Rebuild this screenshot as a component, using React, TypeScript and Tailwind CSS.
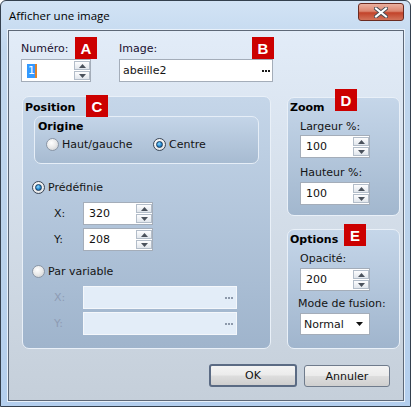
import React from "react";

function Dots({ dim }: { dim?: boolean }) {
  const dot = dim ? "w-[2px] h-[2px] bg-[#8d99ab]" : "w-[2px] h-[2px] bg-[#1a1a1a]";
  return (
    <span className="flex gap-[1px] items-center">
      <span className={dot} />
      <span className={dot} />
      <span className={dot} />
    </span>
  );
}

function SpinBtn({ up }: { up?: boolean }) {
  return (
    <span className="h-[9px] w-[16px] border border-[#b3bdc9] bg-gradient-to-b from-[#fdfdfe] to-[#e1e6ec] flex items-center justify-center">
      <svg width="7" height="4" viewBox="0 0 7 4">
        {up ? <polygon points="0,4 7,4 3.5,0" fill="#4b525c" /> : <polygon points="0,0 7,0 3.5,4" fill="#4b525c" />}
      </svg>
    </span>
  );
}

function SpinInput({ value, selected }: { value: string; selected?: boolean }) {
  return (
    <div className="w-[70px] h-[23px] bg-white border border-[#a4adb9] flex">
      <div className="flex-1 flex items-center pl-[5px] text-[11px] text-[#111]">
        {selected ? (
          <span className="bg-[#3399ff] text-white leading-[14px] pl-[1px] border-r-2 border-[#e0832a]">{value}</span>
        ) : (
          value
        )}
      </div>
      <div className="flex flex-col gap-[1px] pt-[1px] w-[16px]">
        <SpinBtn up />
        <SpinBtn />
      </div>
    </div>
  );
}

function Radio({ checked }: { checked?: boolean }) {
  return (
    <span
      className={
        checked
          ? "w-[13px] h-[13px] rounded-full border border-[#3a4656] bg-[radial-gradient(circle_at_40%_35%,#ffffff_0%,#eeeeee_55%,#cfd3d8_100%)] flex items-center justify-center shrink-0"
          : "w-[13px] h-[13px] rounded-full border border-[#8a96a6] bg-[radial-gradient(circle_at_40%_35%,#ffffff_0%,#e9e9e9_50%,#c6c9cd_100%)] shrink-0"
      }
    >
      {checked && (
        <span className="w-[7px] h-[7px] rounded-full border border-[#173a5e] bg-[radial-gradient(circle_at_40%_35%,#8fdcff_0%,#2b8fd6_50%,#0d4d86_100%)]" />
      )}
    </span>
  );
}

function Badge({ letter, className }: { letter: string; className: string }) {
  return (
    <div
      className={`absolute w-[22px] h-[22px] bg-[#cc0000] text-white flex items-center justify-center font-['Liberation_Sans',sans-serif] font-bold text-[15px] ${className}`}
    >
      {letter}
    </div>
  );
}

function Button({ label, primary }: { label: string; primary?: boolean }) {
  return (
    <div
      className={
        primary
          ? "w-[88px] h-[23px] rounded-[3px] border-2 border-[#5b6b84] bg-[linear-gradient(180deg,#f4f4f4_0%,#ebebeb_48%,#dddddd_52%,#cfcfcf_100%)] flex items-center justify-center text-[11px] text-[#111]"
          : "w-[86px] h-[22px] mt-[1px] rounded-[3px] border border-[#6f7b8c] bg-[linear-gradient(180deg,#f4f4f4_0%,#ebebeb_48%,#dddddd_52%,#cfcfcf_100%)] flex items-center justify-center text-[11px] text-[#111]"
      }
    >
      {label}
    </div>
  );
}

export default function App() {
  return (
    <div className="relative w-[411px] h-[407px] font-['DejaVu_Sans',sans-serif] text-[11px] leading-[13px] text-[#141414]">
      <div className="w-full h-full flex flex-col border border-[#34404e] rounded-t-[6px] bg-[linear-gradient(180deg,#d2e3f5_0%,#c1d7ee_12%,#bad2eb_60%,#b4cfee_100%)]">
        {/* Title bar */}
        <div className="h-[29px] flex items-start justify-between pl-[8px] pr-[6px]">
          <span className="mt-[7px] font-['Open_Sans',sans-serif] text-[11.5px] leading-[16px] text-black">Afficher une image</span>
          <div className="mt-[2px] w-[46px] h-[18px] rounded-[3px] border border-[#6b2b21] bg-[linear-gradient(180deg,#eab0a0_0%,#dc8670_45%,#c2432a_55%,#d2735a_100%)] flex items-center justify-center">
            <svg width="14" height="11" viewBox="0 0 14 11">
              <path d="M2 1.5 L12 9.5 M12 1.5 L2 9.5" stroke="#4a4f57" strokeWidth="4" strokeLinecap="square" />
              <path d="M2 1.5 L12 9.5 M12 1.5 L2 9.5" stroke="#ffffff" strokeWidth="2" strokeLinecap="square" />
            </svg>
          </div>
        </div>

        {/* Client area */}
        <div className="ml-[7px] mr-[6px] mb-[5px] flex-1 border border-[#5d6877] shadow-[0_0_0_1px_#e9f1fa] bg-gradient-to-b from-[#e2ecf8] to-[#c5cfda] flex flex-col">
          {/* Row 1 */}
          <div className="flex pl-[12px] pt-[11px]">
            <div className="w-[70px] flex flex-col">
              <span className="h-[14px] mb-[3px] leading-[14px] text-[#1a1030]">Numéro:</span>
              <SpinInput value="1" selected />
            </div>
            <div className="ml-[28px] w-[154px] flex flex-col">
              <span className="h-[14px] mb-[3px] leading-[14px] text-[#1a1030]">Image:</span>
              <div className="w-[154px] h-[23px] bg-white border border-[#a4adb9] flex items-center justify-between pl-[3px] pr-[2px]">
                <span>abeille2</span>
                <Dots />
              </div>
            </div>
          </div>

          {/* Groups */}
          <div className="flex pl-[13px] mt-[14px]">
            {/* Position */}
            <div className="w-[249px] h-[253px] rounded-[7px] border border-[#e9f0f8] bg-gradient-to-b from-[#c5d6e9] to-[#9fb4cc] flex flex-col">
              <span className="pl-[2px] pt-[4px] font-bold text-black">Position</span>
              <div className="ml-[11px] mt-[2px] w-[225px] h-[48px] rounded-[7px] border border-[#e6eef7] bg-gradient-to-b from-[#c4d5e8] to-[#a7bbd1] flex flex-col">
                <span className="pl-[3px] pt-[3px] font-bold text-black">Origine</span>
                <div className="flex items-center pl-[11px] mt-[5px]">
                  <div className="w-[107px] flex items-center gap-[3px]">
                    <Radio />
                    <span>Haut/gauche</span>
                  </div>
                  <div className="flex items-center gap-[3px]">
                    <Radio checked />
                    <span>Centre</span>
                  </div>
                </div>
              </div>

              <div className="flex items-center gap-[3px] ml-[9px] mt-[17px]">
                <Radio checked />
                <span>Prédéfinie</span>
              </div>
              <div className="flex items-center ml-[31px] mt-[8px]">
                <span className="w-[29px]">X:</span>
                <SpinInput value="320" />
              </div>
              <div className="flex items-center ml-[31px] mt-[3px]">
                <span className="w-[29px]">Y:</span>
                <SpinInput value="208" />
              </div>

              <div className="flex items-center gap-[3px] ml-[9px] mt-[14px]">
                <Radio />
                <span>Par variable</span>
              </div>
              <div className="flex items-center ml-[31px] mt-[8px]">
                <span className="w-[29px] text-[#8e9bb4]">X:</span>
                <div className="w-[154px] h-[23px] bg-[#e3edf8] border border-[#f4f7fb] flex items-center justify-end pr-[3px]">
                  <Dots dim />
                </div>
              </div>
              <div className="flex items-center ml-[31px] mt-[3px]">
                <span className="w-[29px] text-[#8e9bb4]">Y:</span>
                <div className="w-[154px] h-[23px] bg-[#e3edf8] border border-[#f4f7fb] flex items-center justify-end pr-[3px]">
                  <Dots dim />
                </div>
              </div>
            </div>

            {/* Right column */}
            <div className="ml-[16px] w-[113px] flex flex-col">
              <div className="mt-[1px] h-[119px] rounded-[7px] border border-[#e9f0f8] bg-gradient-to-b from-[#c5d6e9] to-[#a2b7ce] flex flex-col">
                <span className="pl-[2px] pt-[3px] font-bold text-black">Zoom</span>
                <div className="pl-[12px] flex flex-col">
                  <span className="mt-[6px]">Largeur %:</span>
                  <div className="mt-[2px]">
                    <SpinInput value="100" />
                  </div>
                  <span className="mt-[8px]">Hauteur %:</span>
                  <div className="mt-[3px]">
                    <SpinInput value="100" />
                  </div>
                </div>
              </div>

              <div className="mt-[13px] h-[120px] rounded-[7px] border border-[#e9f0f8] bg-gradient-to-b from-[#c5d6e9] to-[#a0b5cd] flex flex-col">
                <span className="pl-[2px] pt-[3px] font-bold text-black">Options</span>
                <div className="pl-[12px] flex flex-col">
                  <span className="mt-[6px]">Opacité:</span>
                  <div className="mt-[3px]">
                    <SpinInput value="200" />
                  </div>
                  <span className="mt-[6px] -ml-[2px]">Mode de fusion:</span>
                  <div className="mt-[3px] w-[70px] h-[22px] bg-white border border-[#a4adb9] flex items-center justify-between pl-[3px] pr-[6px]">
                    <span>Normal</span>
                    <svg width="7" height="4" viewBox="0 0 7 4">
                      <polygon points="0,0 7,0 3.5,4" fill="#111" />
                    </svg>
                  </div>
                </div>
              </div>
            </div>
          </div>

          {/* Buttons */}
          <div className="flex justify-end items-start gap-[7px] pr-[13px] mt-[15px]">
            <Button label="OK" primary />
            <Button label="Annuler" />
          </div>
        </div>
      </div>

      <Badge letter="A" className="left-[75px] top-[37px]" />
      <Badge letter="B" className="left-[252px] top-[37px]" />
      <Badge letter="C" className="left-[86px] top-[95px]" />
      <Badge letter="D" className="left-[335px] top-[89px]" />
      <Badge letter="E" className="left-[344px] top-[224px]" />
    </div>
  );
}
